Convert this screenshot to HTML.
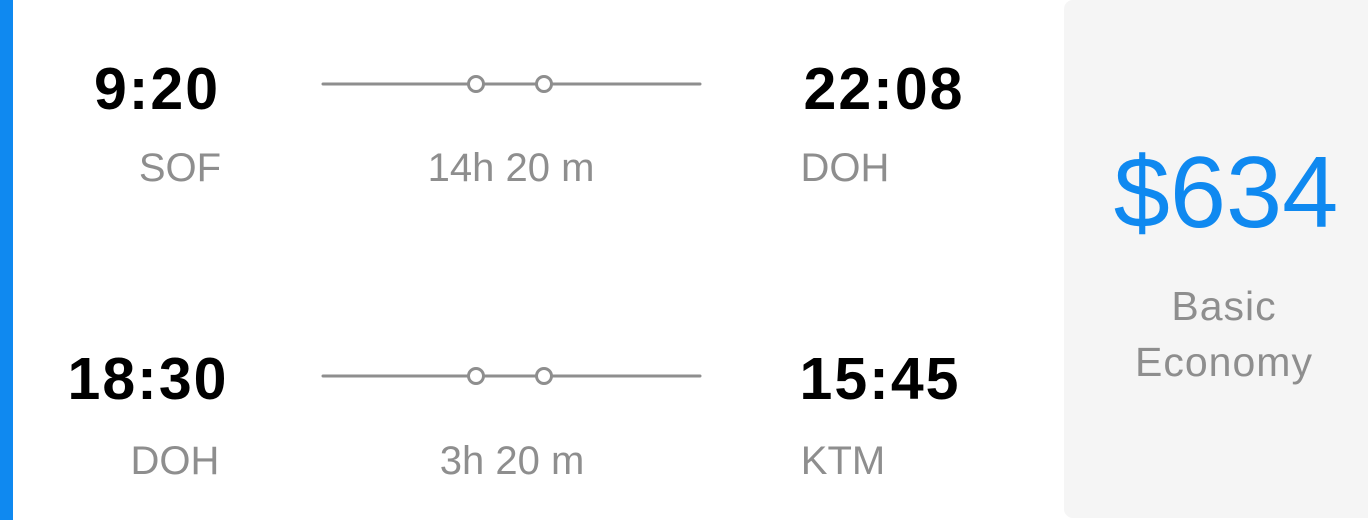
<!DOCTYPE html>
<html><head><style>
html,body{margin:0;padding:0;}
body{width:1368px;height:520px;background:#fff;position:relative;overflow:hidden;font-family:"Liberation Sans",sans-serif;}
.bar{position:absolute;left:0;top:0;width:13px;height:520px;background:#0f89f0;}
.panel{position:absolute;left:1064px;top:0;width:320px;height:518px;background:#f5f5f5;border-radius:9px;}
.t{position:absolute;width:300px;margin-left:-150px;text-align:center;line-height:1;white-space:nowrap;}
.time{font-size:59px;font-weight:bold;color:#000;letter-spacing:2px;}
.lbl{font-size:40px;color:#8e8e8e;}
.price{font-size:101px;color:#0f89f0;}
.cls{font-size:41px;color:#8e8e8e;letter-spacing:1px;}
svg{position:absolute;left:0;top:0;}
</style></head><body>
<div class="bar"></div>
<div class="panel"></div>
<svg width="1368" height="520">
<g stroke="#8e8e8e" stroke-width="3" fill="#fff" stroke-linecap="round">
<line x1="323" y1="84" x2="700" y2="84"/>
<circle cx="476" cy="84" r="7.5"/><circle cx="544" cy="84" r="7.5"/>
<line x1="323" y1="376" x2="700" y2="376"/>
<circle cx="476" cy="376" r="7.5"/><circle cx="544" cy="376" r="7.5"/>
</g></svg>
<div class="t time" style="left:157px;top:60px">9:20</div>
<div class="t lbl" style="left:180px;top:148px">SOF</div>
<div class="t lbl" style="left:511px;top:148px">14h 20 m</div>
<div class="t time" style="left:884px;top:60px">22:08</div>
<div class="t lbl" style="left:845px;top:148px">DOH</div>

<div class="t time" style="left:148px;top:350px">18:30</div>
<div class="t lbl" style="left:175px;top:441px">DOH</div>
<div class="t lbl" style="left:512px;top:441px">3h 20 m</div>
<div class="t time" style="left:880px;top:350px">15:45</div>
<div class="t lbl" style="left:843px;top:441px">KTM</div>

<div class="t price" style="left:1226px;top:143px">$634</div>
<div class="t cls" style="left:1224px;top:286px">Basic</div>
<div class="t cls" style="left:1224px;top:342px">Economy</div>
</body></html>
